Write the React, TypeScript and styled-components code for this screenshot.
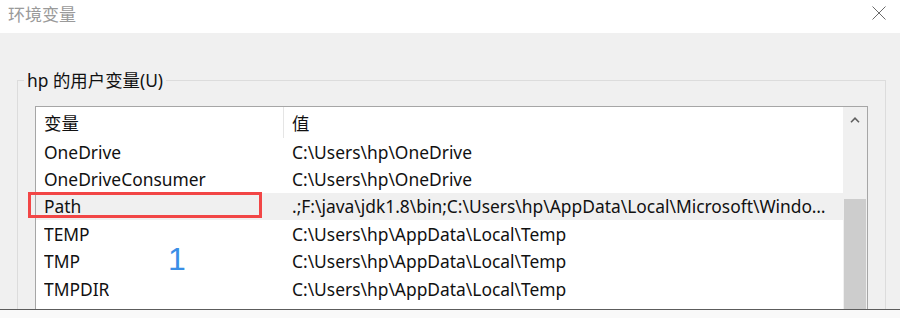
import React from 'react';
import styled, { createGlobalStyle } from 'styled-components';

interface EnvVar {
  name: string;
  value: string;
}

const USER_VARS: EnvVar[] = [
  { name: 'OneDrive', value: 'C:\\Users\\hp\\OneDrive' },
  { name: 'OneDriveConsumer', value: 'C:\\Users\\hp\\OneDrive' },
  {
    name: 'Path',
    value:
      '.;F:\\java\\jdk1.8\\bin;C:\\Users\\hp\\AppData\\Local\\Microsoft\\WindowsApps;C:\\Users\\hp\\AppData\\Local\\Programs',
  },
  { name: 'TEMP', value: 'C:\\Users\\hp\\AppData\\Local\\Temp' },
  { name: 'TMP', value: 'C:\\Users\\hp\\AppData\\Local\\Temp' },
  { name: 'TMPDIR', value: 'C:\\Users\\hp\\AppData\\Local\\Temp' },
  { name: 'WebStorm', value: 'D:\\WebStorm\\WebStorm 2019.3.3\\bin;' },
];

const GlobalStyle = createGlobalStyle`
  html, body {
    margin: 0;
    padding: 0;
    background: #f9f9f9;
  }
  body {
    width: 900px;
    height: 318px;
    overflow: hidden;
    font-family: "Noto Sans", "Noto Sans CJK SC", sans-serif;
  }
`;

const Window = styled.div`
  height: 310px;
  box-sizing: border-box;
  border-bottom: 1px solid #5c5c5c;
  display: flex;
  flex-direction: column;
  overflow: hidden;
`;

const TitleBar = styled.div`
  height: 33px;
  flex: none;
  background: #fff;
  display: flex;
  align-items: center;
  justify-content: space-between;
  padding: 0 14px 0 8px;
`;

const Title = styled.div`
  font-family: "Noto Sans CJK SC", sans-serif;
  font-size: 17px;
  color: #9a9a9a;
  margin-top: -6px;
`;

const CloseButton = styled.div`
  width: 14px;
  height: 14px;
  margin-top: -8px;
  display: flex;
`;

const Body = styled.div`
  flex: 1;
  min-height: 0;
  background: #f0f0f0;
  padding: 36px 14px 0 17px;
  display: flex;
  flex-direction: column;
`;

const Group = styled.fieldset`
  flex: 1;
  min-height: 0;
  margin: 0;
  padding: 15px 17px 0 17px;
  border: 1px solid #dcdcdc;
  border-bottom: none;
  display: flex;
  flex-direction: column;
`;

const Legend = styled.legend`
  padding: 0 3px;
  margin-left: -11px;
  font-size: 17.4px;
  line-height: 22px;
  color: #111;
`;

const ListBox = styled.div`
  flex: 1;
  min-height: 0;
  border: 1px solid #a6a6a6;
  border-bottom: none;
  background: #fff;
  display: flex;
`;

const Table = styled.div`
  flex: 1;
  min-width: 0;
  position: relative;
`;

const HeaderRow = styled.div`
  height: 31px;
  display: grid;
  grid-template-columns: 248px 1fr;
`;

const HeaderCell = styled.div<{ $divider?: boolean }>`
  display: flex;
  align-items: center;
  padding: 0 8px;
  font-size: 17.4px;
  color: #111;
  border-right: ${(p) => (p.$divider ? '1px solid #e5e5e5' : 'none')};
`;

const Row = styled.div<{ $selected?: boolean }>`
  height: 27.4px;
  display: grid;
  grid-template-columns: 248px 1fr;
  background: ${(p) => (p.$selected ? '#f0f0f0' : '#fff')};
`;

const Cell = styled.div`
  display: flex;
  align-items: center;
  padding: 0 12px 0 8px;
  font-size: 17.4px;
  color: #111;
  min-width: 0;
  white-space: nowrap;
  overflow: hidden;
`;

const CellText = styled.span`
  overflow: hidden;
  text-overflow: ellipsis;
`;

const Marker = styled.div`
  position: absolute;
  left: -8px;
  top: 85px;
  width: 234px;
  height: 26px;
  box-sizing: border-box;
  border: 3px solid #f24646;
  pointer-events: none;
`;

const Annotation = styled.div`
  position: absolute;
  left: 132px;
  top: 136px;
  font-family: "Liberation Sans", sans-serif;
  font-size: 32px;
  line-height: 32px;
  color: #3a8ee6;
`;

const ScrollBar = styled.div`
  width: 24px;
  flex: none;
  background: #f0f0f0;
  display: flex;
  flex-direction: column;
`;

const ArrowButton = styled.div`
  height: 26px;
  display: flex;
  align-items: center;
  justify-content: center;
`;

const Track = styled.div`
  flex: 1;
  padding: 66px 1px 0 1px;
  display: flex;
`;

const Thumb = styled.div`
  flex: 1;
  background: #cdcdcd;
`;

export default function App() {
  return (
    <>
      <GlobalStyle />
      <Window>
        <TitleBar>
          <Title>环境变量</Title>
          <CloseButton>
            <svg width="14" height="14" viewBox="0 0 14 14">
              <path d="M0.5 0.5 L13.5 13.5 M13.5 0.5 L0.5 13.5" stroke="#6b6b6b" strokeWidth="1" fill="none" />
            </svg>
          </CloseButton>
        </TitleBar>
        <Body>
          <Group>
            <Legend>hp 的用户变量(U)</Legend>
            <ListBox>
              <Table>
                <HeaderRow>
                  <HeaderCell $divider>变量</HeaderCell>
                  <HeaderCell>值</HeaderCell>
                </HeaderRow>
                {USER_VARS.map((v) => (
                  <Row key={v.name} $selected={v.name === 'Path'}>
                    <Cell>
                      <CellText>{v.name}</CellText>
                    </Cell>
                    <Cell>
                      <CellText>{v.value}</CellText>
                    </Cell>
                  </Row>
                ))}
                <Marker />
                <Annotation>1</Annotation>
              </Table>
              <ScrollBar>
                <ArrowButton>
                  <svg width="10" height="6" viewBox="0 0 10 6">
                    <path d="M1 5.2 L5 1.2 L9 5.2" stroke="#606060" strokeWidth="1.6" fill="none" />
                  </svg>
                </ArrowButton>
                <Track>
                  <Thumb />
                </Track>
              </ScrollBar>
            </ListBox>
          </Group>
        </Body>
      </Window>
    </>
  );
}
